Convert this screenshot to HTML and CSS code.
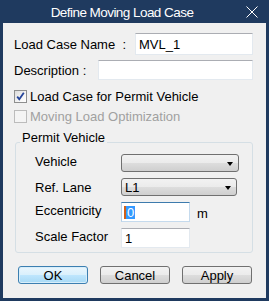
FILE: index.html
```html
<!DOCTYPE html>
<html>
<head>
<meta charset="utf-8">
<link rel="stylesheet" href="styles.css">
</head>
<body>
<div class="window">
  <div class="titlebar">
    <div class="title">Define Moving Load Case</div>
    <div class="close">
      <svg width="12" height="12" viewBox="0 0 12 12"><path d="M0.5 0.5L11.5 11.5M11.5 0.5L0.5 11.5" stroke="#ffffff" stroke-width="1" fill="none"/></svg>
    </div>
  </div>
  <div class="body">
    <div class="row row-name">
      <span class="label">Load Case Name&nbsp;&nbsp;:</span>
      <div class="textbox name-box">MVL_1</div>
    </div>
    <div class="row row-desc">
      <span class="label">Description :</span>
      <div class="textbox desc-box"></div>
    </div>
    <div class="check-row check-first">
      <span class="checkbox checked">
        <svg width="11" height="11" viewBox="0 0 11 11"><path d="M2.2 5.6L4.3 8.3L8.8 1.8" stroke="#24449a" stroke-width="1.8" fill="none"/></svg>
      </span>
      <span class="check-text">Load Case for Permit Vehicle</span>
    </div>
    <div class="check-row check-second disabled">
      <span class="checkbox"></span>
      <span class="check-text">Moving Load Optimization</span>
    </div>
    <fieldset class="group">
      <legend class="group-title">Permit Vehicle</legend>
      <div class="group-grid">
        <span class="glabel lbl-vehicle">Vehicle</span>
        <div class="combo combo-vehicle"><span class="combo-text"></span><span class="arrow"></span></div>
        <span class="glabel lbl-lane">Ref. Lane</span>
        <div class="combo combo-lane"><span class="combo-text">L1</span><span class="arrow"></span></div>
        <span class="glabel lbl-ecc">Eccentricity</span>
        <div class="ecc-cell">
          <div class="textbox small-box focused"><span class="caret"></span><span class="sel">0</span></div>
          <span class="unit">m</span>
        </div>
        <span class="glabel lbl-scale">Scale Factor</span>
        <div class="textbox small-box">1</div>
      </div>
    </fieldset>
    <div class="buttons">
      <div class="btn btn-default">OK</div>
      <div class="btn">Cancel</div>
      <div class="btn">Apply</div>
    </div>
  </div>
</div>
</body>
</html>
```
FILE: styles.css
```css
html, body {
  margin: 0;
  padding: 0;
}
body {
  width: 269px;
  height: 301px;
  overflow: hidden;
  font-family: "Liberation Sans", Arial, sans-serif;
  font-size: 13px;
  color: #000;
}
.window {
  box-sizing: border-box;
  width: 269px;
  height: 301px;
  background: #1f3a5f;
  padding: 0 3px 3px 3px;
  display: flex;
  flex-direction: column;
}
.titlebar {
  height: 23px;
  display: flex;
  align-items: center;
  color: #fff;
  flex: none;
}
.title {
  flex: 1;
  text-align: center;
  font-size: 13.5px;
  letter-spacing: -0.55px;
  padding-top: 1px;
}
.close {
  width: 25px;
  height: 23px;
  display: flex;
  align-items: center;
  padding-left: 5px;
  box-sizing: border-box;
  padding-top: 1px;
}
.close svg { display: block; }
.body {
  flex: 1;
  background: #f0f0f0;
  padding: 10px 13px 0 11px;
  display: flex;
  flex-direction: column;
}
.row {
  display: flex;
  align-items: center;
  justify-content: space-between;
}
.row-name { height: 22px; }
.row-desc { height: 20px; margin-top: 5px; }
.textbox {
  box-sizing: border-box;
  background: #fff;
  border: 1px solid #e3e9ef;
  border-top-color: #abadb3;
  display: flex;
  align-items: center;
  padding-left: 3px;
  white-space: nowrap;
}
.name-box { width: 118px; height: 22px; }
.desc-box { width: 155px; height: 20px; }
.check-row {
  display: flex;
  align-items: center;
  height: 15px;
}
.check-first { margin-top: 9px; }
.check-second { margin-top: 5px; }
.checkbox {
  box-sizing: border-box;
  width: 13px;
  height: 13px;
  border: 1px solid #8e8f8f;
  background: linear-gradient(135deg, #dcdcdc 0%, #f4f4f4 60%, #ffffff 100%);
  display: flex;
  align-items: center;
  justify-content: center;
}
.checkbox svg { display: block; }
.check-text { margin-left: 3px; }
.disabled .checkbox {
  border-color: #bcbcbc;
  background: #f4f4f4;
}
.disabled .check-text { color: #a0a0a0; }
.group {
  margin: 7px 0 0 1px;
  padding: 0 4px 4px 4px;
  border: 1px solid #d5dfe5;
  border-radius: 3px;
  min-inline-size: 0;
}
.group-title {
  padding: 0 2px 8px 2px;
  line-height: 14px;
}
.group-grid {
  display: grid;
  grid-template-columns: 86px auto;
  grid-template-rows: 18px 18px 20px 20px;
  row-gap: 6px;
  margin-left: 15px;
  margin-top: 1px;
}
.glabel {
  align-self: center;
}
.lbl-vehicle { margin-top: -3px; }
.lbl-lane { margin-top: 0; }
.lbl-ecc { margin-top: -3px; }
.lbl-scale { margin-top: -4px; }
.combo {
  box-sizing: border-box;
  height: 18px;
  border: 1px solid #707070;
  border-radius: 3px;
  background: linear-gradient(#f2f2f2 0%, #ebebeb 50%, #dddddd 51%, #cfcfcf 100%);
  display: flex;
  align-items: center;
  justify-content: space-between;
  padding: 0 5px 0 3px;
}
.combo-vehicle { width: 118px; }
.combo-lane { width: 116px; }
.arrow {
  width: 0;
  height: 0;
  border-left: 3.5px solid transparent;
  border-right: 3.5px solid transparent;
  border-top: 4px solid #000;
  margin-top: 1px;
}
.ecc-cell {
  display: flex;
  align-items: center;
}
.small-box {
  width: 69px;
  height: 20px;
}
.focused {
  border-color: #c5daed;
  border-top-color: #3d7bad;
  border-left-color: #b5cfe7;
  padding-left: 2px;
}
.caret {
  width: 2px;
  height: 13px;
  background: #d06018;
}
.sel {
  background: #3399ff;
  color: #fff;
  line-height: 13px;
  padding: 0 1px;
}
.unit { margin-left: 7px; margin-top: 2px; }
.buttons {
  display: flex;
  gap: 12px;
  margin-top: 13px;
  padding-left: 4px;
}
.btn {
  box-sizing: border-box;
  width: 70px;
  height: 18px;
  border: 1px solid #707070;
  border-radius: 3px;
  background: linear-gradient(#f2f2f2 0%, #ebebeb 50%, #dddddd 51%, #cfcfcf 100%);
  display: flex;
  align-items: center;
  justify-content: center;
}
.btn-default {
  border-color: #3c7fb1;
  background: linear-gradient(#eaf6fd 0%, #d9f0fc 50%, #bee6fd 51%, #a7d9f5 100%);
  box-shadow: inset 0 0 0 1px #d8eefa;
}
```
